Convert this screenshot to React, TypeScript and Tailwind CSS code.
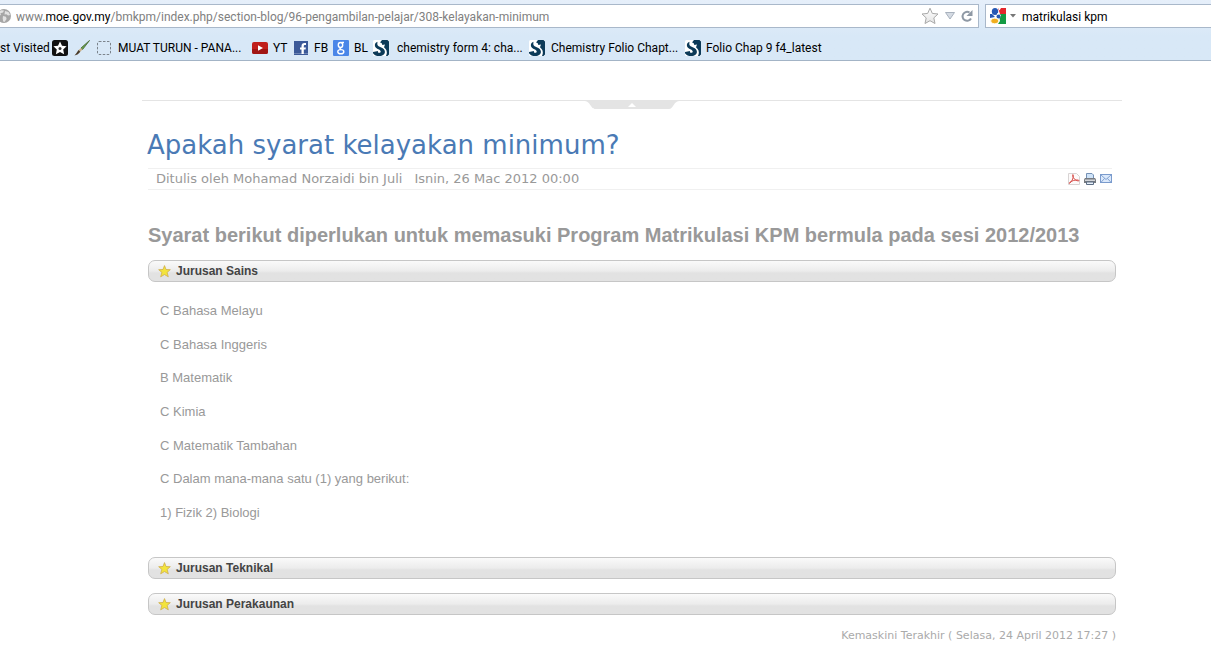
import { useState, type ReactNode } from "react";

const GlobeIcon = () => (
  <svg width="16" height="16" viewBox="0 0 16 16" className="shrink-0">
    <circle cx="8" cy="8" r="7" fill="#a6a6a6" />
    <path d="M2 4.500 5 2.200l3 .2-1 2.100-2.600.8.6 1.600-1.600.6L2 6.500zM9 3l3.500 1 1.600 3-2 .5-1.700-1.300-1.900.2zM7 8l3 .8.6 2.200-2.100 3-1.300-.4-.5-3z" fill="#e2e2e2" />
  </svg>
);

const BookmarkStar = () => (
  <svg width="18" height="18" viewBox="0 0 18 18">
    <defs>
      <linearGradient id="paleStar" x1="0" y1="0" x2="0" y2="1">
        <stop offset="0" stopColor="#fff" />
        <stop offset="1" stopColor="#e3e3e3" />
      </linearGradient>
    </defs>
    <path d="M9 1.200l2.300 5.200 5.700.6-4.200 3.900 1.200 5.600L9 13.700l-5 2.800 1.200-5.600L1 7l5.700-.6z" fill="url(#paleStar)" stroke="#a9a9a9" strokeLinejoin="round" />
  </svg>
);

const ReloadIcon = () => (
  <svg width="14" height="14" viewBox="0 0 14 14">
    <path d="M9.500 3.500A4.500 4.500 0 1 0 11 9.500" fill="none" stroke="#8f99a5" strokeWidth="2" />
    <path d="M12.500 1v6h-6z" fill="#8f99a5" />
  </svg>
);

const GoogleIcon = () => (
  <svg width="16" height="16" viewBox="0 0 16 16" className="shrink-0">
    <path fill="#fff" d="M0 0h16v16H0z" />
    <path fill="#e3262c" d="M8 0h8v6H10z" />
    <path fill="#139a43" d="M9 6h7v10H8l2-3z" />
    <path fill="#2558b4" d="M0 6h2l3 3-5 1z" />
    <ellipse cx="5" cy="3.500" rx="3.200" ry="3.500" fill="#2558b4" />
    <path d="M8 0h3L9.500 2.500zM7 5l4 2-1 3-3-1z" fill="#fff" />
    <circle cx="8.500" cy="8.500" r="2" fill="#2558b4" />
    <ellipse cx="4.700" cy="13" rx="4" ry="2.800" fill="#f0ae1d" stroke="#fff" strokeWidth="0.800" />
  </svg>
);

const BlackStar = () => (
  <svg width="16" height="16" viewBox="0 0 16 16">
    <rect width="16" height="16" rx="2.500" fill="#111" />
    <path d="M8 1.500l2 4.200 4.600.6-3.400 3.200.9 4.700L8 12l-4.100 2.200.9-4.700L1.400 6.300 6 5.700z" fill="#fff" />
    <circle cx="8" cy="8.500" r="1.500" fill="#333" />
  </svg>
);

const BrushIcon = () => (
  <svg width="16" height="16" viewBox="0 0 16 16">
    <path d="M15.500.5 7 8l1.500 1.600z" fill="#68a548" stroke="#4c6d3b" strokeWidth="0.900" />
    <path d="M7 8l1.500 1.600-2.200 2.200L4.600 10z" fill="#c9b08a" />
    <path d="M4.600 10l1.700 1.800C4.500 14.300 2.500 15.200.5 15.500 2 14 3 12 4.600 10z" fill="#4a3a28" />
  </svg>
);

const DashedIcon = () => (
  <svg width="14" height="14" viewBox="0 0 14 14">
    <rect x="0.500" y="0.500" width="13" height="13" rx="1.500" fill="none" stroke="#7c848c" strokeDasharray="2.500 1.500" />
  </svg>
);

const YoutubeIcon = () => (
  <svg width="16" height="12" viewBox="0 0 16 12">
    <rect width="16" height="12" rx="2" fill="#c01f1b" />
    <path d="M0 7h16v3a2 2 0 0 1-2 2H2a2 2 0 0 1-2-2z" fill="#a11513" />
    <path d="M6 3.200 11 6 6 8.800z" fill="#fff" />
  </svg>
);

const FacebookIcon = () => (
  <svg width="14" height="14" viewBox="0 0 14 14">
    <rect width="14" height="14" fill="#3b5998" />
    <path d="M0 12h14v1H0z" fill="#6d84b4" />
    <path d="M7.500 13V8.500H6v-2h1.500V5c0-2 1.200-3 3-3H12v2h-1c-.8 0-1.200.4-1.200 1.100v1.400h2.100l-.3 2H9.800V13z" fill="#fff" />
  </svg>
);

const GBlueIcon = () => (
  <svg width="16" height="16" viewBox="0 0 16 16">
    <rect width="16" height="16" rx="1" fill="#4a86e8" />
    <g fill="none" stroke="#fff" strokeWidth="1.400">
      <ellipse cx="7.500" cy="5" rx="2.200" ry="2.500" />
      <path d="M8.500 2.500H11M7.600 7.500c-1.200.8-.6 1.500.6 2" />
      <ellipse cx="7.800" cy="11.700" rx="3" ry="2.100" />
    </g>
  </svg>
);

const ScribdIcon = () => (
  <svg width="16" height="16" viewBox="0 0 16 16">
    <rect width="16" height="16" rx="1.500" fill="#fff" />
    <path d="M9 0h5.500L16 1.500v13L14.500 16H13c1.300-2.600 1.200-5.300-.6-7.300L11 7.300l1-2.800L9.300 5C9.200 3.500 8.500 2.600 7 2.500z" fill="#0c3a58" />
    <path d="M4.500 1.800C2.300 2.600 1.500 4.500 2 6.200c.5 1.500 1.800 2.300 3.400 3.100C7 10.100 7.800 10.700 7.700 11.700c-.1.900-.9 1.300-1.700 1.100-.9-.2-1.300-1-1-1.900L0 12v1.200C1.300 15.200 3.600 16 6.300 16c3.500 0 5.600-1.700 5.600-4.300 0-2.100-1.400-3.200-3.700-4.300C6 6.400 4.800 5.800 4.400 4.700c-.3-1 0-2 .1-2.900z" fill="#0c3a58" />
  </svg>
);

const PdfIcon = () => (
  <svg width="12" height="12" viewBox="0 0 12 12">
    <path d="M.5.5h8l3 3v8H.5z" fill="#fdfafa" stroke="#d8d4d4" />
    <path d="M1.500 10.300C3.500 9.200 5.500 5.500 5.300 2.200c0-1-1-.8-.7.3C5.300 5.300 7 7.600 10.300 8c1 0 .8-1-.5-1C7 6.800 4.300 7.700 2 9.200c-1 .7-1 1.400-.5 1.100z" fill="none" stroke="#d8504c" strokeWidth="1" />
  </svg>
);

const PrinterIcon = () => (
  <svg width="12" height="12" viewBox="0 0 12 12">
    <path d="M2.500.5h5.500l1.500 1.500V6h-7z" fill="#cfe3f8" stroke="#7591b5" />
    <path d="M1 5h10l1 1.500V10H0V6.500z" fill="#777b80" />
    <path d="M1 6.500h10v1.500H1z" fill="#d5d7da" />
    <path d="M2.500 9h7v2.500h-7z" fill="#e9f1fa" stroke="#5d6e85" />
  </svg>
);

const MailIcon = () => (
  <svg width="12" height="10" viewBox="0 0 12 10">
    <rect x="0.500" y="0.500" width="11" height="8" fill="#dbe9fb" stroke="#7a9bcd" />
    <path d="M1 1l5 4.500L11 1M1 8.300l3.700-4M11 8.300l-3.700-4" fill="none" stroke="#7a9bcd" strokeWidth="0.900" />
  </svg>
);

const YellowStar = () => (
  <svg width="13" height="13" viewBox="0 0 13 13">
    <path d="M6.500.6 8 4.500l4.300.2L9.100 7.400l1.200 4.400-3.800-2.300-3.800 2.300 1.200-4.400L.7 4.700 5 4.500z" fill="#f3e43c" stroke="#cfae4a" strokeWidth="0.800" strokeLinejoin="round" />
  </svg>
);

const bookmarks: { icon: ReactNode; title: string; label?: string; className: string }[] = [
  { icon: <BlackStar />, title: "Star", className: "w-[22px]" },
  { icon: <BrushIcon />, title: "Brush", className: "w-[23px]" },
  { icon: <DashedIcon />, title: "Muat turun", label: "MUAT TURUN - PANA...", className: "w-[155px] gap-[7px]" },
  { icon: <YoutubeIcon />, title: "YouTube", label: "YT", className: "w-[42px] gap-[5px]" },
  { icon: <FacebookIcon />, title: "Facebook", label: "FB", className: "w-[39px] gap-[6px]" },
  { icon: <GBlueIcon />, title: "Google", label: "BL", className: "w-[40px] gap-[5px]" },
  { icon: <ScribdIcon />, title: "Scribd", label: "chemistry form 4: cha...", className: "w-[156px] gap-2" },
  { icon: <ScribdIcon />, title: "Scribd", label: "Chemistry Folio Chapt...", className: "w-[156px] gap-[6px]" },
  { icon: <ScribdIcon />, title: "Scribd", label: "Folio Chap 9 f4_latest", className: "gap-[5px]" },
];

const subjects = [
  "C Bahasa Melayu",
  "C Bahasa Inggeris",
  "B Matematik",
  "C Kimia",
  "C Matematik Tambahan",
  "C Dalam mana-mana satu (1) yang berikut:",
  "1) Fizik 2) Biologi",
];

const BrowserBar = () => (
  <header className="h-[61px] border-b border-[#a3b4c6] bg-linear-to-b from-[#e6effa] to-[#d8e8f7] to-60% pt-1 font-[Roboto,sans-serif] text-xs text-black">
    <div className="flex h-6 gap-[6px]">
      <div className="flex min-w-0 flex-1 items-center border border-l-0 border-[#a9b8ca] bg-white pr-1">
        <div className="-ml-1">
          <GlobeIcon />
        </div>
        <div role="textbox" aria-label="Address" className="ml-1 flex-1 truncate pt-px text-[#808080]">
          www.<span className="text-black">moe.gov.my</span>/bmkpm/index.php/section-blog/96-pengambilan-pelajar/308-kelayakan-minimum
        </div>
        <button aria-label="Bookmark this page">
          <BookmarkStar />
        </button>
        <button aria-label="History" className="ml-1 p-[2px]">
          <svg width="10" height="8" viewBox="0 0 10 8">
            <path d="M.5.5h9L5 7z" fill="#d5dbe3" stroke="#a8b1bd" />
          </svg>
        </button>
        <button aria-label="Reload" className="ml-[3px]">
          <ReloadIcon />
        </button>
      </div>
      <div className="flex w-[226px] items-center border border-r-0 border-[#a9b8ca] bg-white pl-1">
        <button aria-label="Search engine" className="flex items-center gap-1">
          <GoogleIcon />
          <svg width="6" height="4" viewBox="0 0 6 4">
            <path d="M0 0h6L3 3.500z" fill="#777" />
          </svg>
        </button>
        <input aria-label="Search" defaultValue="matrikulasi kpm" className="ml-[6px] min-w-0 flex-1 pt-px outline-none" />
      </div>
    </div>
    <nav className="flex h-8 items-center overflow-hidden pt-[7px] whitespace-nowrap">
      <a href="#" className="w-[52px] shrink-0">
        st Visited
      </a>
      {bookmarks.map((item, index) => (
        <a key={index} href="#" title={item.title} className={`flex shrink-0 items-center ${item.className}`}>
          <span className="shrink-0">{item.icon}</span>
          {item.label}
        </a>
      ))}
    </nav>
  </header>
);

const Section = ({ title, open, onToggle, children }: { title: string; open: boolean; onToggle: () => void; children?: ReactNode }) => (
  <div>
    <button
      onClick={onToggle}
      aria-expanded={open}
      className="flex h-[22px] w-full items-center gap-[5px] rounded-[7px] border border-[#c6c6c6] bg-linear-to-b from-[#fafafa] from-0% via-[#ececec] via-50% to-[#e2e2e2] to-60% pl-[9px] text-xs font-bold text-[#444]"
    >
      <YellowStar />
      {title}
    </button>
    {open && children}
  </div>
);

const App = () => {
  const [active, setActive] = useState(0);
  const toggle = (index: number) => setActive(active === index ? -1 : index);

  return (
    <div className="min-h-screen bg-white font-['Liberation_Sans',Arial,sans-serif] text-[#999]">
      <BrowserBar />
      <main className="mt-[39px] mr-[89px] ml-[142px]">
        <div className="flex h-[9px] justify-center border-t border-[#e4e4e4]">
          <button aria-label="Toggle panel">
            <svg width="98" height="8" viewBox="0 0 98 8">
              <path d="M0 0h98c-5 0-6 2-8 5s-3 3-5 3H13c-2 0-3 0-5-3S5 0 0 0z" fill="#e4e4e4" />
              <path d="M49 2l4 4h-8z" fill="#fff" />
            </svg>
          </button>
        </div>

        <article className="px-[6px] pt-4">
          <h1 className="-ml-px font-['DejaVu_Sans',sans-serif] text-[26px] leading-10 whitespace-nowrap text-[#4a7ab5]">
            Apakah syarat kelayakan minimum?
          </h1>
          <div className="mt-[3px] mr-1 flex h-[22px] items-center border-y border-[#f0f0f0] pl-2 font-['DejaVu_Sans',sans-serif] text-[13px]">
            <span>Ditulis oleh Mohamad Norzaidi bin Juli</span>
            <span className="ml-3">Isnin, 26 Mac 2012 00:00</span>
            <div className="ml-auto flex items-center gap-1">
              <a href="#" aria-label="PDF">
                <PdfIcon />
              </a>
              <a href="#" aria-label="Cetak">
                <PrinterIcon />
              </a>
              <a href="#" aria-label="E-mel">
                <MailIcon />
              </a>
            </div>
          </div>

          <h2 className="mt-8 text-xl leading-[26px] font-bold">
            Syarat berikut diperlukan untuk memasuki Program Matrikulasi KPM bermula pada sesi 2012/2013
          </h2>

          <div className="mt-3 flex flex-col gap-[14px]">
            <Section title="Jurusan Sains" open={active === 0} onToggle={() => toggle(0)}>
              <ul className="mt-[19px] mb-5 flex min-h-[222px] flex-col justify-between px-3 text-[13px] leading-5">
                {subjects.map((subject) => (
                  <li key={subject}>{subject}</li>
                ))}
              </ul>
            </Section>
            <Section title="Jurusan Teknikal" open={active === 1} onToggle={() => toggle(1)} />
            <Section title="Jurusan Perakaunan" open={active === 2} onToggle={() => toggle(2)} />
          </div>

          <p className="mt-[13px] text-right font-['DejaVu_Sans',sans-serif] text-[11px] leading-4 text-[#aaa]">
            Kemaskini Terakhir ( Selasa, 24 April 2012 17:27 )
          </p>
        </article>
      </main>
    </div>
  );
};

export default App;
